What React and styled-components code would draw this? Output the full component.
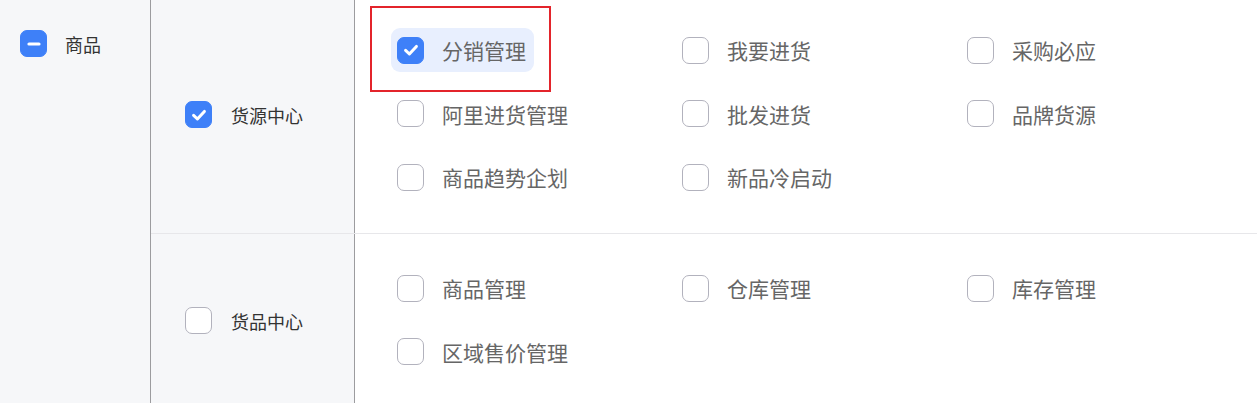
import React from "react";
import styled, { createGlobalStyle } from "styled-components";

const Global = createGlobalStyle`
  html, body { margin: 0; padding: 0; overflow: hidden; background: #ffffff; }
  body { font-family: "Noto Sans CJK SC", "Noto Sans", sans-serif; }
  * { box-sizing: border-box; }
`;

const Page = styled.div`
  display: flex;
  height: 403px;
  width: 1257px;
`;

const TopColumn = styled.div`
  width: 151px;
  flex: none;
  background: #f6f7f9;
  border-right: 1px solid #9c9c9f;
  padding: 30px 0 0 20px;
`;

const Groups = styled.div`
  flex: 1;
  display: flex;
  flex-direction: column;
`;

const Section = styled.div`
  display: flex;
  height: ${(p) => p.$h}px;
  flex: none;
  border-bottom: ${(p) => (p.$last ? "none" : "1px solid #e7e7ea")};
`;

const GroupCell = styled.div`
  width: 204px;
  flex: none;
  background: #f6f7f9;
  border-right: 1px solid #9c9c9f;
  display: flex;
  align-items: center;
  padding-left: 34px;
  padding-bottom: ${(p) => p.$lift}px;
`;

const ItemsCell = styled.div`
  flex: 1;
  display: grid;
  grid-template-columns: repeat(3, 285px);
  grid-auto-rows: 44px;
  row-gap: 19.5px;
  align-content: start;
  padding-left: 36px;
  padding-top: ${(p) => p.$top}px;
`;

const Label = styled.label`
  display: flex;
  align-items: center;
  gap: ${(p) => p.$gap}px;
  font-size: ${(p) => p.$size}px;
  color: ${(p) => p.$color};
  line-height: 1;
  white-space: nowrap;
`;

const Item = styled.div`
  position: relative;
  display: flex;
  align-items: center;
  gap: 18px;
  justify-self: start;
  height: 44px;
  padding: 0 8px 0 6px;
  border-radius: 9px;
  background: ${(p) => (p.$active ? "#e8effe" : "transparent")};
  font-size: 21px;
  color: #666666;
  white-space: nowrap;
`;

const Box = styled.span`
  width: 27px;
  height: 27px;
  flex: none;
  border-radius: 7px;
  display: inline-flex;
  align-items: center;
  justify-content: center;
  background: ${(p) => (p.$on ? "#3e80f8" : "#ffffff")};
  border: 1px solid ${(p) => (p.$on ? "#3e80f8" : "#b2b2bd")};
`;

const Annotation = styled.div`
  position: absolute;
  left: -21px;
  top: -22px;
  width: 181px;
  height: 86px;
  border: 2px solid #e3242b;
  pointer-events: none;
`;

const Check = () => (
  <svg width="18" height="18" viewBox="0 0 18 18" fill="none">
    <path d="M3.6 9.4 L7.4 13 L14.4 5.4" stroke="#fff" strokeWidth="3" strokeLinecap="round" strokeLinejoin="round" />
  </svg>
);

const Minus = () => (
  <svg width="18" height="18" viewBox="0 0 18 18" fill="none">
    <path d="M4 9 H14" stroke="#fff" strokeWidth="3.2" strokeLinecap="round" />
  </svg>
);

const Checkbox = ({ state }) => (
  <Box $on={state !== "off"}>
    {state === "on" && <Check />}
    {state === "half" && <Minus />}
  </Box>
);

const groups = [
  {
    name: "货源中心",
    state: "on",
    h: 234,
    top: 28,
    lift: 4,
    items: ["分销管理", "我要进货", "采购必应", "阿里进货管理", "批发进货", "品牌货源", "商品趋势企划", "新品冷启动"],
    active: "分销管理",
  },
  {
    name: "货品中心",
    state: "off",
    h: 174,
    top: 32,
    lift: 1,
    items: ["商品管理", "仓库管理", "库存管理", "区域售价管理"],
  },
];

export default function App() {
  return (
    <>
      <Global />
      <Page>
        <TopColumn>
          <Label $gap={18} $size={18} $color="#333333">
            <Checkbox state="half" />
            商品
          </Label>
        </TopColumn>
        <Groups>
          {groups.map((g, gi) => (
            <Section key={g.name} $h={g.h} $last={gi === groups.length - 1}>
              <GroupCell $lift={g.lift}>
                <Label $gap={19} $size={18} $color="#333333">
                  <Checkbox state={g.state} />
                  {g.name}
                </Label>
              </GroupCell>
              <ItemsCell $top={g.top}>
                {g.items.map((it) => {
                  const active = it === g.active;
                  return (
                    <Item key={it} $active={active}>
                      <Checkbox state={active ? "on" : "off"} />
                      {it}
                      {active && <Annotation />}
                    </Item>
                  );
                })}
              </ItemsCell>
            </Section>
          ))}
        </Groups>
      </Page>
    </>
  );
}
